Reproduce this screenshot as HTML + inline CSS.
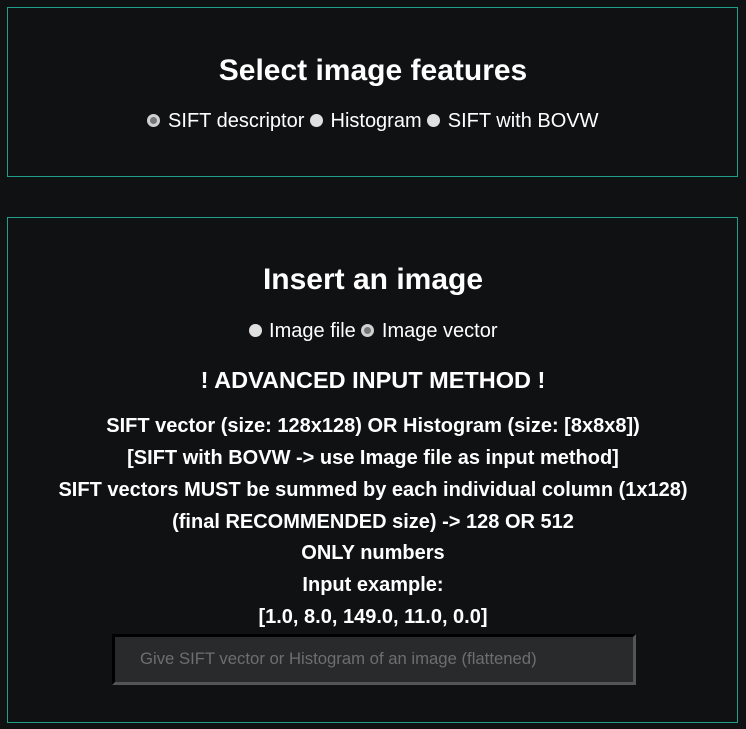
<!DOCTYPE html>
<html><head><style>
body{margin:0;width:746px;height:729px;background:#101113;color:#fff;font-family:"Liberation Sans",Arial,sans-serif;position:relative;overflow:hidden}
.box{position:absolute;left:7px;width:731px;border:1px solid #1f9e8a;box-sizing:border-box}
.t{position:absolute;left:0;width:746px;text-align:center;white-space:nowrap}
.r{display:inline-block;width:13px;height:13px;border-radius:50%;background:#e0e0e0;vertical-align:0px;margin:0 2px 0 0;box-sizing:border-box}
.r.on{border:3px solid #d0d0d0;background:#777}
.b{font-weight:bold;font-size:20px}
.inp{position:absolute;left:112px;top:634px;width:524px;height:51px;box-sizing:border-box;background:#292a2c;border-top:3px solid #000;border-left:3px solid #000;border-right:3px solid #555;border-bottom:3px solid #555;color:#6e6e6e;font-size:16.7px;padding:12px 0 0 25px}
</style></head><body>
<div class="box" style="top:7px;height:170px"></div>
<div class="box" style="top:217px;height:506px"></div>
<div class="t" style="top:54px;font-size:30px;font-weight:bold">Select image features</div>
<div class="t" style="top:110px;font-size:20px"><span class="r on"></span> SIFT descriptor <span class="r"></span> Histogram <span class="r"></span> SIFT with BOVW</div>
<div class="t" style="top:263px;font-size:30px;font-weight:bold">Insert an image</div>
<div class="t" style="top:320px;font-size:20px"><span class="r"></span> Image file <span class="r on"></span> Image vector</div>
<div class="t" style="top:367px;font-size:23.5px;font-weight:bold">! ADVANCED INPUT METHOD !</div>
<div class="t b" style="top:415px">SIFT vector (size: 128x128) OR Histogram (size: [8x8x8])</div>
<div class="t b" style="top:447px">[SIFT with BOVW -&gt; use Image file as input method]</div>
<div class="t b" style="top:479px">SIFT vectors MUST be summed by each individual column (1x128)</div>
<div class="t b" style="top:511px">(final RECOMMENDED size) -&gt; 128 OR 512</div>
<div class="t b" style="top:542px">ONLY numbers</div>
<div class="t b" style="top:574px">Input example:</div>
<div class="t b" style="top:606px">[1.0, 8.0, 149.0, 11.0, 0.0]</div>
<div class="inp">Give SIFT vector or Histogram of an image (flattened)</div>
</body></html>
